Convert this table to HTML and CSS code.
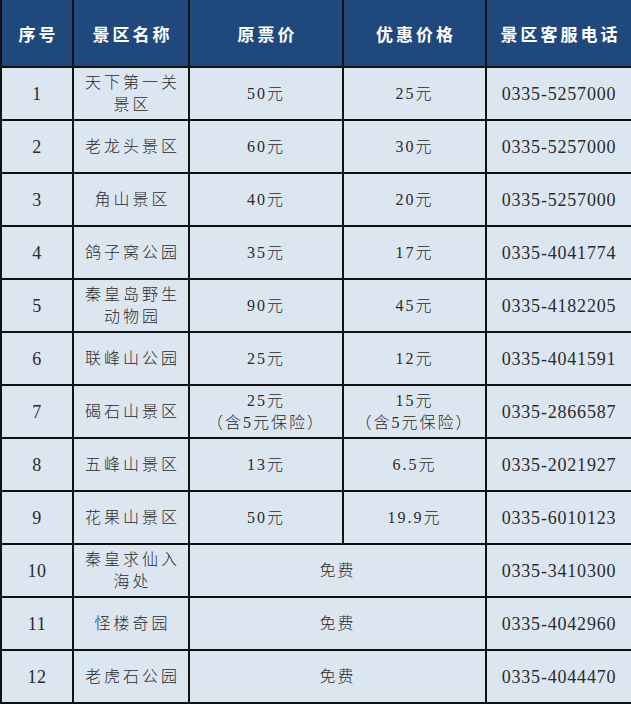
FILE: index.html
```html
<!DOCTYPE html>
<html lang="zh-CN">
<head>
<meta charset="utf-8">
<title>景区门票</title>
<link rel="stylesheet" href="styles.css">
</head>
<body>
<table class="tickets">
  <colgroup>
    <col class="c1"><col class="c2"><col class="c3"><col class="c4"><col class="c5">
  </colgroup>
  <thead>
    <tr>
      <th>序号</th><th>景区名称</th><th>原票价</th><th>优惠价格</th><th>景区客服电话</th>
    </tr>
  </thead>
  <tbody>
    <tr><td class="num">1</td><td class="name">天下第一关<br>景区</td><td>50元</td><td>25元</td><td class="tel">0335-5257000</td></tr>
    <tr><td class="num">2</td><td class="name">老龙头景区</td><td>60元</td><td>30元</td><td class="tel">0335-5257000</td></tr>
    <tr><td class="num">3</td><td class="name">角山景区</td><td>40元</td><td>20元</td><td class="tel">0335-5257000</td></tr>
    <tr><td class="num">4</td><td class="name">鸽子窝公园</td><td>35元</td><td>17元</td><td class="tel">0335-4041774</td></tr>
    <tr><td class="num">5</td><td class="name">秦皇岛野生<br>动物园</td><td>90元</td><td>45元</td><td class="tel">0335-4182205</td></tr>
    <tr><td class="num">6</td><td class="name">联峰山公园</td><td>25元</td><td>12元</td><td class="tel">0335-4041591</td></tr>
    <tr><td class="num">7</td><td class="name">碣石山景区</td><td>25元<br><span class="note">（含5元保险）</span></td><td>15元<br><span class="note">（含5元保险）</span></td><td class="tel">0335-2866587</td></tr>
    <tr><td class="num">8</td><td class="name">五峰山景区</td><td>13元</td><td>6.5元</td><td class="tel">0335-2021927</td></tr>
    <tr><td class="num">9</td><td class="name">花果山景区</td><td>50元</td><td>19.9元</td><td class="tel">0335-6010123</td></tr>
    <tr><td class="num">10</td><td class="name">秦皇求仙入<br>海处</td><td colspan="2">免费</td><td class="tel">0335-3410300</td></tr>
    <tr><td class="num">11</td><td class="name">怪楼奇园</td><td colspan="2">免费</td><td class="tel">0335-4042960</td></tr>
    <tr><td class="num">12</td><td class="name">老虎石公园</td><td colspan="2">免费</td><td class="tel">0335-4044470</td></tr>
  </tbody>
</table>
</body>
</html>
```

FILE: styles.css
```css
html, body {
  margin: 0;
  padding: 0;
  background: #ffffff;
}

.tickets {
  width: 631px;
  table-layout: fixed;
  border-collapse: collapse;
  font-family: "Liberation Serif", "Noto Sans CJK SC", serif;
  color: #2a2a2a;
}

.c1 { width: 72px; }
.c2 { width: 116px; }
.c3 { width: 154px; }
.c4 { width: 143px; }
.c5 { width: 146px; }

.tickets th,
.tickets td {
  border: 2px solid #111111;
  text-align: center;
  vertical-align: middle;
  padding: 0;
}

.tickets th {
  height: 66px;
  border-top: 0;
  background: #1f497d;
  color: #ffffff;
  font-family: "Noto Sans CJK SC", sans-serif;
  font-weight: 700;
  font-size: 17px;
  letter-spacing: 3px;
  padding-left: 3px;
}

.tickets td {
  height: 51px;
  background: #dce6f1;
  font-size: 16px;
  font-weight: 300;
  line-height: 22px;
  letter-spacing: 2px;
}

.tickets td.num {
  font-size: 18px;
  letter-spacing: 0.5px;
}

.tickets td.name {
  letter-spacing: 3px;
  padding-left: 3px;
}

.tickets td.tel {
  font-size: 18px;
  letter-spacing: 0.8px;
}

.note {
  letter-spacing: 2px;
}
```
